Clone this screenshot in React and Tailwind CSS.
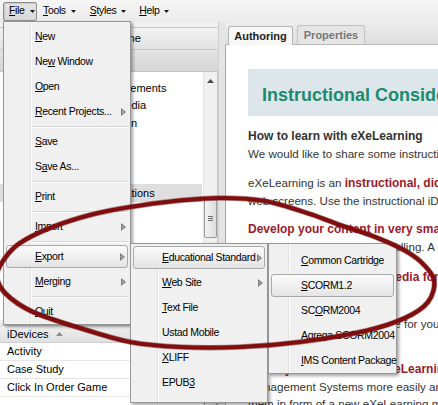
import React from "react";

const F = "font-['Liberation_Sans',Arial,sans-serif]";

function Caret() {
  return (
    <svg width="5" height="3" viewBox="0 0 5 3" className="ml-[5px]">
      <polygon points="0,0 5,0 2.5,3" fill="#1a1a1a" />
    </svg>
  );
}

function RightArrow() {
  return (
    <svg width="5" height="8" viewBox="0 0 5 8">
      <polygon points="0,0 5,4 0,8" fill="#7c7c7c" />
      <polygon points="1,2 3.4,4 1,6" fill="#a8a8a8" />
    </svg>
  );
}

function U({ children }) {
  return <span className="underline underline-offset-[1px]">{children}</span>;
}

function Item({ children, arrow, active, arrowPr = "pr-[4px]", textPl = 31 }) {
  const base = "h-[25px] flex items-center whitespace-nowrap";
  if (active) {
    return (
      <div className="h-[25px] py-[1px] px-[2px]">
        <div
          className={`h-[23px] flex items-center whitespace-nowrap rounded-[3px] border border-[#a9a9a9] bg-gradient-to-b from-[#fbfbfb] to-[#e4e4e4] ${
            textPl === 31 ? "pl-[28px]" : "pl-[29px]"
          } pr-[2px]`}
        >
          <span>{children}</span>
          {arrow && (
            <span className="ml-auto flex">
              <RightArrow />
            </span>
          )}
        </div>
      </div>
    );
  }
  return (
    <div className={`${base} ${textPl === 31 ? "pl-[31px]" : "pl-[32px]"} ${arrowPr}`}>
      <span>{children}</span>
      {arrow && (
        <span className="ml-auto flex">
          <RightArrow />
        </span>
      )}
    </div>
  );
}

function Sep() {
  return (
    <div className="h-[5px] flex flex-col justify-center pl-[28px] pr-[2px]">
      <div className="h-px bg-[#d7d7d7]" />
      <div className="h-px bg-white" />
    </div>
  );
}

function Gutter({ left = 26 }) {
  return (
    <div
      className={`absolute top-0 bottom-0 ${left === 26 ? "left-[26px]" : "left-[19px]"} w-[2px] flex`}
    >
      <div className="w-px bg-[#e0e0e0]" />
      <div className="w-px bg-white" />
    </div>
  );
}

const menuBox =
  "absolute border border-[#979797] bg-[#f0f0f0] shadow-[2px_2px_3px_rgba(0,0,0,0.35)] text-[10.5px] tracking-[-0.35px] text-black";

function FileMenu() {
  return (
    <div className={`${menuBox} left-[3px] top-[21px] w-[128px] pt-[2px]`}>
      <Gutter />
      <div className="relative">
        <Item><U>N</U>ew</Item>
        <Item>Ne<U>w</U> Window</Item>
        <Item><U>O</U>pen</Item>
        <Item arrow><U>R</U>ecent Projects...</Item>
        <Sep />
        <Item><U>S</U>ave</Item>
        <Item>S<U>a</U>ve As...</Item>
        <Sep />
        <Item><U>P</U>rint</Item>
        <Sep />
        <Item arrow><U>I</U>mport</Item>
        <Sep />
        <Item arrow active><U>E</U>xport</Item>
        <Item arrow><U>M</U>erging</Item>
        <Sep />
        <Item><U>Q</U>uit</Item>
      </div>
    </div>
  );
}

function ExportMenu() {
  return (
    <div className={`${menuBox} left-[130px] top-[243px] w-[138px] pt-[1px] pb-[7px]`}>
      <Gutter />
      <div className="relative">
        <Item arrow active><U>E</U>ducational Standard</Item>
        <Item arrow arrowPr="pr-[4px]"><U>W</U>eb Site</Item>
        <Item><U>T</U>ext File</Item>
        <Item>Ustad Mobile</Item>
        <Item><U>X</U>LIFF</Item>
        <Item>EPUB<U>3</U></Item>
      </div>
    </div>
  );
}

function StandardMenu() {
  return (
    <div className={`${menuBox} left-[268px] top-[243px] w-[129px] pt-[4px]`}>
      <Gutter left={19} />
      <div className="relative">
        <Item textPl={32}><U>C</U>ommon Cartridge</Item>
        <Item active textPl={32}><U>S</U>CORM1.2</Item>
        <Item textPl={32}>SC<U>O</U>RM2004</Item>
        <Item textPl={32}><U>A</U>grega SCORM2004</Item>
        <Item textPl={32}><U>I</U>MS Content Package</Item>
      </div>
    </div>
  );
}

function MenuBar() {
  return (
    <div className="h-[22px] shrink-0 flex items-center bg-gradient-to-b from-[#f6f6f6] to-[#ebebeb] text-[10.5px] tracking-[-0.35px] text-black">
      <div className="ml-[3px] h-[19px] w-[34px] flex items-center pl-[5px] border border-[#8d8d8d] rounded-[2px] bg-gradient-to-b from-[#e4e4e4] to-[#d8d8d8] shadow-[inset_1px_1px_1px_rgba(0,0,0,0.12)]">
        <span><U>F</U>ile</span>
        <Caret />
      </div>
      <div className="ml-[6px] flex items-center">
        <span><U>T</U>ools</span>
        <Caret />
      </div>
      <div className="ml-[14px] flex items-center">
        <span><U>S</U>tyles</span>
        <Caret />
      </div>
      <div className="ml-[13px] flex items-center">
        <span><U>H</U>elp</span>
        <Caret />
      </div>
    </div>
  );
}

function Grip() {
  return (
    <div className="flex flex-col gap-[1px] w-[5px]">
      <div className="h-px bg-[#6f6f6f]" />
      <div className="h-px bg-[#6f6f6f]" />
      <div className="h-px bg-[#6f6f6f]" />
    </div>
  );
}

function TreeRow({ children, pl, selected }) {
  return (
    <div
      className={`h-[17.5px] flex items-center whitespace-nowrap ${pl} ${
        selected ? "bg-[#dedede]" : ""
      }`}
    >
      {children}
    </div>
  );
}

function LeftPanel() {
  return (
    <div className="w-[218px] shrink-0 flex flex-col text-[11px] text-black">
      <div className="h-[5px] shrink-0" />
      <div className="h-[23px] shrink-0 flex items-center pl-[106px] border-y border-[#c9c9c9] bg-gradient-to-b from-[#f2f2f2] to-[#e2e2e2]">
        Outline
      </div>
      <div className="h-[22px] shrink-0 border-b border-[#c3c3c3] bg-gradient-to-b from-[#e3e3e3] to-[#d6d6d6]" />
      <div className="h-[248px] shrink-0 flex bg-white border-r border-[#c8c8c8]">
        <div className="flex-1 pt-[7px] pr-[1px]">
          <TreeRow pl="pl-[93px]">Page elements</TreeRow>
          <TreeRow pl="pl-[93px]">Multimedia</TreeRow>
          <TreeRow pl="pl-[93px]">Question</TreeRow>
          <TreeRow pl="pl-[40px]">Glossary</TreeRow>
          <TreeRow pl="pl-[40px]">Resources</TreeRow>
          <TreeRow pl="pl-[40px]">Credits</TreeRow>
          <TreeRow pl="pl-[19px]" selected>Instructional Considerations</TreeRow>
        </div>
        <div className="w-[14px] bg-[#f0f0f0] border-l border-[#e2e2e2] flex flex-col items-center">
          <svg width="7" height="4" viewBox="0 0 7 4" className="mt-[7px]">
            <polygon points="0,4 3.5,0 7,4" fill="#4a4a4a" />
          </svg>
          <div className="mt-[115px] w-[13px] h-[40px] rounded-[2px] border border-[#9a9a9a] bg-gradient-to-r from-[#f4f4f4] to-[#dcdcdc] flex items-center justify-center">
            <Grip />
          </div>
        </div>
      </div>
      <div className="h-[5px] shrink-0 bg-[#f0f0f0]" />
      <div className="h-[18px] shrink-0 flex items-center pl-[7px] border-y border-[#cfcfcf] bg-gradient-to-b from-[#f0f0f0] to-[#e0e0e0]">
        <span>iDevices</span>
        <svg width="7" height="4" viewBox="0 0 7 4" className="ml-[7px]">
          <polygon points="0,4 3.5,0 7,4" fill="#8a8a8a" />
        </svg>
      </div>
      <div className="flex-1 min-h-0 overflow-hidden flex bg-white border-r border-[#c8c8c8]">
        <div className="flex-1">
          {["Activity", "Case Study", "Click In Order Game", ""].map((t, i) => (
            <div
              key={i}
              className="h-[18px] flex items-center pl-[7px] border-b border-[#e6e6e6] whitespace-nowrap"
            >
              {t}
            </div>
          ))}
        </div>
        <div className="w-[14px] bg-[#f0f0f0] border-l border-[#e2e2e2] flex flex-col items-center justify-end">
          <div className="w-[13px] h-[14px] rounded-t-[2px] border border-b-0 border-[#9a9a9a] bg-gradient-to-r from-[#f4f4f4] to-[#dcdcdc] flex items-start pt-[5px] justify-center">
            <Grip />
          </div>
        </div>
      </div>
    </div>
  );
}

function RightPanel() {
  const red = "text-[#9c1a2c] font-bold text-[12px]";
  return (
    <div className={`flex-1 flex flex-col min-w-0 ${F}`}>
      <div className="h-[23px] shrink-0 flex items-end pl-[3px] gap-[4px] bg-gradient-to-b from-[#ececec] to-[#dedede] border-b border-[#b9b9b9] text-[11px] font-bold">
        <div className="h-[19px] w-[65px] flex items-center justify-center rounded-t-[3px] border border-b-0 border-[#b3b3b3] bg-[#f7f7f7] text-[#222] -mb-px">
          Authoring
        </div>
        <div className="h-[19px] w-[68px] flex items-center justify-center rounded-t-[3px] border border-b-0 border-[#c2c2c2] bg-[#e5e5e5] text-[#777]">
          Properties
        </div>
      </div>
      <div className="flex-1 min-h-0 bg-white border-l border-[#a8a8a8] overflow-hidden pl-[22px] pt-[24px] text-[11.6px] leading-[17px] text-[#333] whitespace-nowrap">
        <div className="h-[47px] bg-[#dde6eb] pl-[14px] pt-[16px]">
          <div className="text-[18px] leading-[21px] font-bold text-[#1c8a6e]">
            Instructional Considerations
          </div>
        </div>
        <div className="mt-[12px]">
          <div className="font-bold text-[12px]">How to learn with eXeLearning</div>
          <div>We would like to share some instructional considerations</div>
        </div>
        <div className="mt-[12px]">
          <div>
            eXeLearning is an <span className={red}>instructional, didactic tool</span>
          </div>
          <div>web screens. Use the instructional iDevices</div>
        </div>
        <div className="mt-[12px]">
          <div className={red}>Develop your content in very small chunks</div>
          <div>Make small pages, avoid scrolling. A page</div>
        </div>
        <div className="mt-[14px]">
          <div className={red}>Use graphics and other media for learning</div>
        </div>
        <div className="mt-[12px]">
          <div>Pictures help to explain</div>
          <div>which is a wonderful resource for your learners</div>
          <div>and your learners.</div>
        </div>
        <div className="mt-[12px]">
          <div className={red}>Share your works with eXeLearning</div>
          <div>Management Systems more easily and share</div>
          <div>them in form of a new eXeLearning module</div>
        </div>
      </div>
    </div>
  );
}

function crPath(p) {
  const n = p.length;
  let d = `M${p[0][0]},${p[0][1]}`;
  for (let i = 0; i < n; i++) {
    const p0 = p[(i - 1 + n) % n];
    const p1 = p[i];
    const p2 = p[(i + 1) % n];
    const p3 = p[(i + 2) % n];
    const c1 = [p1[0] + (p2[0] - p0[0]) / 6, p1[1] + (p2[1] - p0[1]) / 6];
    const c2 = [p2[0] - (p3[0] - p1[0]) / 6, p2[1] - (p3[1] - p1[1]) / 6];
    d += ` C${c1[0].toFixed(1)},${c1[1].toFixed(1)} ${c2[0].toFixed(1)},${c2[1].toFixed(1)} ${p2[0]},${p2[1]}`;
  }
  return d + "Z";
}

const ellipsePts = [
  [-3, 275], [5, 258], [20, 243], [50, 228], [90, 215], [130, 207], [175, 201],
  [220, 198], [265, 201], [310, 214], [340, 225], [370, 235], [400, 248],
  [420, 261], [434, 280], [428, 302], [405, 318], [365, 331], [300, 342],
  [240, 347], [180, 347], [130, 342], [83, 329], [33, 312], [5, 293],
];

function Annotation() {
  const d = crPath(ellipsePts);
  return (
    <svg
      className="absolute inset-0 pointer-events-none"
      width="438"
      height="405"
      viewBox="0 0 438 405"
    >
      <path d={d} fill="none" stroke="#5e0a0a" strokeWidth="5.5" opacity="0.45" />
      <path d={d} fill="none" stroke="#800e0f" strokeWidth="4.2" />
    </svg>
  );
}

export default function App() {
  return (
    <div className={`relative w-[438px] h-[405px] overflow-hidden bg-[#f0f0f0] flex flex-col ${F}`}>
      <MenuBar />
      <div className="h-[383px] shrink-0 flex">
        <LeftPanel />
        <div className="w-[7px] shrink-0 bg-[#e4e4e4] border-l border-[#d0d0d0]" />
        <RightPanel />
      </div>
      <FileMenu />
      <ExportMenu />
      <StandardMenu />
      <Annotation />
    </div>
  );
}
